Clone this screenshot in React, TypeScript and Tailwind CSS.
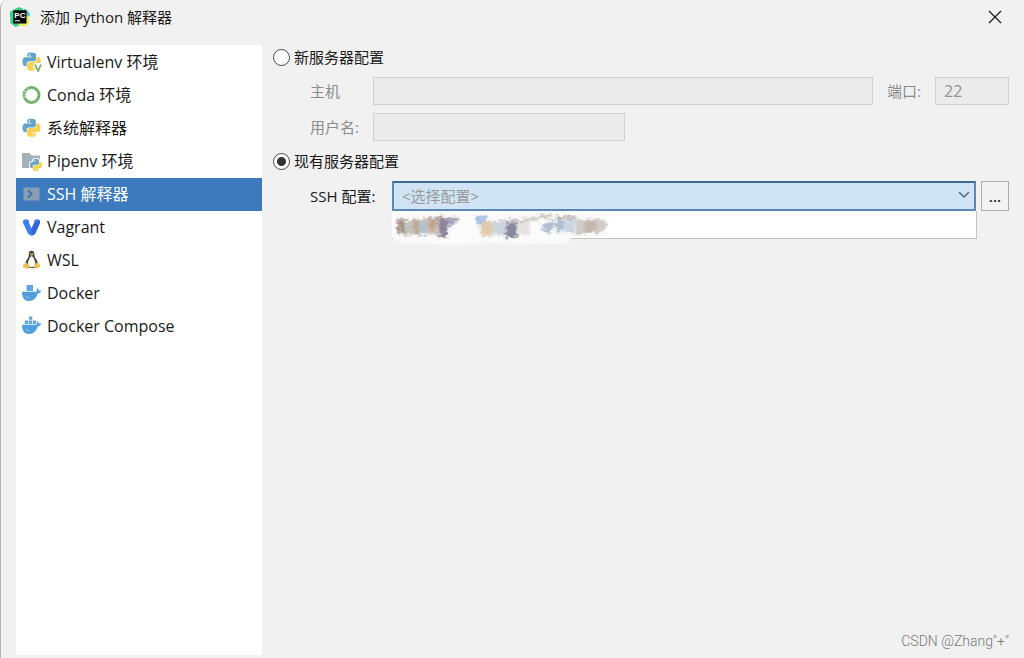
import {useId, useState} from "react";
import type {ReactNode} from "react";

const SNAKE =
    "M14.25.18l.9.2.73.26.59.3.45.32.34.34.25.34.16.33.1.3.04.26.02.2-.01.13V8.5l-.05.63-.13.55-.21.46-.26.38-.3.31-.33.25-.35.19-.35.14-.33.1-.3.07-.26.04-.21.02H8.77l-.69.05-.59.14-.5.22-.41.27-.33.32-.27.35-.2.36-.15.37-.1.35-.07.32-.04.27-.02.21v3.06H3.17l-.21-.03-.28-.07-.32-.12-.35-.18-.36-.26-.36-.36-.35-.46-.32-.59-.28-.73-.21-.88-.14-1.05-.05-1.23.06-1.22.16-1.04.24-.87.32-.71.36-.57.4-.44.42-.33.42-.24.4-.16.36-.1.32-.05.24-.01h.16l.06.01h8.16v-.83H6.18l-.01-2.75-.02-.37.05-.34.11-.31.17-.28.25-.26.31-.23.38-.2.44-.18.51-.15.58-.12.64-.1.71-.06.77-.04.84-.02 1.27.05z";

function Snakes() {
    return (
        <>
            <path d={SNAKE} fill="#64a4cb"/>
            <circle cx="9.1" cy="3" r="1.1" fill="#fff"/>
            <g transform="rotate(180 12 12)">
                <path d={SNAKE} fill="#f9d04f"/>
                <circle cx="9.1" cy="3" r="1.1" fill="#fff"/>
            </g>
        </>
    );
}

function Icon({children}: {children: ReactNode}) {
    return (
        <svg className="h-5 w-5 shrink-0" viewBox="0 0 20 20" aria-hidden="true">
            {children}
        </svg>
    );
}

function VirtualenvIcon() {
    return (
        <Icon>
            <g transform="translate(.5 .5) scale(.76)">
                <Snakes/>
            </g>
            <path d="M11.500 11h8.500v9h-6z" fill="#fff"/>
            <path d="m13.200 12.500 2.900 6.500 2.900-6.500" fill="none" stroke="#72b15c" strokeWidth="1.700"/>
        </Icon>
    );
}

function CondaIcon() {
    return (
        <Icon>
            <circle cx="9.500" cy="10" r="7.500" fill="none" stroke="#6cb266" strokeWidth="3"/>
            <path d="M2 5.500 5 7.500M.5 9l4 .8M4.500 2.500l2 3M.8 12.500l3.500-.8" stroke="#fff" strokeWidth=".6"/>
            <circle cx="9.500" cy="10" r="6.600" fill="none" stroke="#d8edd5" strokeWidth="1" strokeDasharray="1 1.600" pathLength="42" opacity=".6"/>
        </Icon>
    );
}

function PythonIcon() {
    return (
        <Icon>
            <g transform="translate(.5 .8) scale(.75)">
                <Snakes/>
            </g>
        </Icon>
    );
}

function PipenvIcon() {
    return (
        <Icon>
            <path d="M0 2h7.500l2 2.500H18V17H0z" fill="#a5b1b9"/>
            <g transform="translate(8 8) scale(.5)">
                <g stroke="#fff" strokeWidth="4" strokeLinejoin="round">
                    <path d={SNAKE}/>
                    <path d={SNAKE} transform="rotate(180 12 12)"/>
                </g>
                <Snakes/>
            </g>
        </Icon>
    );
}

function SshIcon() {
    return (
        <Icon>
            <path d="M1.500 3.500h16v13h-16z" fill="#8a9eb3"/>
            <path d="m6 6.500 3.800 3.500L6 13.500" fill="none" stroke="#3b75ae" strokeWidth="1.900"/>
        </Icon>
    );
}

function VagrantIcon() {
    return (
        <Icon>
            <path d="M1 3.500 4 2l3 1.500v2.200l2.600 5.800 2.600-5.800V3.500l3-1.500L18 3.500v2.300L13 17l-3.400 1.700L6.200 17 1 5.800z" fill="#3f7df0"/>
            <path d="m12.200 5.700 2.500-1.200L18 3.500v2.300L13 17l-3.400 1.700v-7.200z" fill="#3164d8"/>
        </Icon>
    );
}

function TuxIcon() {
    return (
        <Icon>
            <path d="M9.600.8c-2 0-3 1.500-2.800 3.600.1 2-.4 2.800-1.500 4.500C4 11 3.300 12.600 3.500 15l4.500 3h4l3.800-3c.2-2.500-.6-4.300-1.900-6.200-1.200-1.700-1.500-2.500-1.500-4.300C12.400 2.200 11.500.8 9.600.8z" fill="#423e38"/>
            <path d="M9.500 6.300c-1 0-1.500.900-2 2.200-.9 2-1.700 3.200-1.500 5.200.1 2.200 1.500 3.600 3.600 3.600 2.200 0 3.700-1.400 3.800-3.800.1-1.900-.8-3.300-1.600-5-.5-1.200-1-2.200-2.300-2.200z" fill="#f8f7f4"/>
            <path d="M8 4.300h3.500L9.800 6.200z" fill="#eebd45"/>
            <circle cx="8.700" cy="3.500" r=".55" fill="#fff"/>
            <circle cx="10.800" cy="3.500" r=".55" fill="#fff"/>
            <path d="M4.200 12.300 7.500 16.500c.5 1.300-.5 2.500-2 2.200l-4-1c-1-.3-.5-1.200-.2-2-.3-1.200.3-1.500 1.300-1.700zM15.100 12.300l-2.700 3.200c-.7 1.800-.3 3.400 1.300 3.300 1.700-.3 2.500-1.300 4-1.900 1-.5.8-1.100-.1-1.800-.2-1.600-.5-1.800-1-1.800z" fill="#ecc153"/>
        </Icon>
    );
}

function Whale() {
    return (
        <>
            <path d="M0 8.800h14.800c-.4-1.500-.1-2.500.7-3.500.9.700 1.300 1.400 1.400 2.300.9-.1 1.600 0 2.200.4-.5 1.600-1.600 2.300-3.300 2.300C14.500 15 11.700 18 7 18 2.700 18 0 15 0 8.800z" fill="#529ddf"/>
            <path d="M4.500 12.800c0 1.500 1.200 2.300 2.500 2" fill="none" stroke="#b7d8f3" strokeWidth=".8"/>
        </>
    );
}

function DockerIcon() {
    return (
        <Icon>
            <Whale/>
            <path d="M4.500 2H11v6H4.500z" fill="#61a7e4"/>
        </Icon>
    );
}

function DockerComposeIcon() {
    return (
        <Icon>
            <Whale/>
            <path d="M7 .5h3.300v3.300H7zM2.800 4.500h3.600V8H2.800zM7 4.500h3.300V8H7zM11 4.500h3V8h-3z" fill="#61a7e4"/>
        </Icon>
    );
}

function PyCharmIcon() {
    return (
        <svg className="h-5 w-5 shrink-0" viewBox="0 0 20 20" aria-hidden="true">
            <path d="M0 4.500 9 0l5.500 2.500L13 17l-7.500 3L.3 16z" fill="#35d188"/>
            <path d="m13 2 5 2 2 4-1.500 2 1 6.500-5.500 3.200L8 18z" fill="#e8ee55"/>
            <path d="m13.800 1.500 4.500 2.700L20 8l-1.700 1.700-4-4z" fill="#38bfe8"/>
            <path d="M3.300 3.300h13.200v13.200H3.300z" fill="#050505"/>
            <path d="M5 13.800h5" stroke="#fff" strokeWidth="1"/>
            <text x="4.300" y="10.500" fill="#fff" fontFamily="Liberation Sans" fontWeight="700" fontSize="8">PC</text>
        </svg>
    );
}

const ENVIRONMENTS = [
    {label: "Virtualenv 环境", icon: <VirtualenvIcon/>},
    {label: "Conda 环境", icon: <CondaIcon/>},
    {label: "系统解释器", icon: <PythonIcon/>},
    {label: "Pipenv 环境", icon: <PipenvIcon/>},
    {label: "SSH 解释器", icon: <SshIcon/>},
    {label: "Vagrant", icon: <VagrantIcon/>},
    {label: "WSL", icon: <TuxIcon/>},
    {label: "Docker", icon: <DockerIcon/>},
    {label: "Docker Compose", icon: <DockerComposeIcon/>},
];

// Hidden server name in the open list
function Smudge() {
    const id = useId();
    return (
        <svg className="absolute -left-1 -top-1 h-10 w-60" viewBox="0 0 240 40" aria-hidden="true">
            <defs>
                <filter id={id} x="-10%" y="-30%" width="120%" height="160%">
                    <feTurbulence type="fractalNoise" baseFrequency=".25 .35" numOctaves="3" seed="4" result="n"/>
                    <feGaussianBlur in="SourceGraphic" stdDeviation="1.300" result="b"/>
                    <feDisplacementMap in="b" in2="n" scale="8" xChannelSelector="R" yChannelSelector="G"/>
                </filter>
            </defs>
            <g filter={`url(#${id})`}>
                <path d="M4 8h216v20l-36 1-4 7-50 1-30-1-40 2-54-3z" fill="#fbfbfb"/>
                <path d="M8 13h22l8-3h32l-6 7-8 11H44l-6-2-20 3-8-2z" fill="#cdc3bd"/>
                <path d="M10 12h7v14h-7z" fill="#a39588"/>
                <path d="M17 16h9v10h-9z" fill="#bfc3bf"/>
                <path d="M26 12h4v15h-4zM40 13h8v10h-8z" fill="#c0a385"/>
                <path d="M30 15h9v13h-9z" fill="#b3c3ca"/>
                <path d="M44 10h20v3H44z" fill="#a99a98"/>
                <path d="M51 12h8v19h-8z" fill="#8d869a"/>
                <path d="M59 11h12l-6 8h-6z" fill="#aaa4bb"/>
                <path d="M86 9h13v8l-9 2z" fill="#aac3e5"/>
                <path d="M93 15h11v14H93z" fill="#e3cbaa"/>
                <path d="M104 14h17v14h-17z" fill="#ccd5dd"/>
                <path d="M119 14h10v17h-12z" fill="#868a9c"/>
                <path d="M129 16h13v12h-13z" fill="#e6e3e3"/>
                <path d="m108 13 28-1 28-6v4l-30 6z" fill="#c9c3be"/>
                <path d="m152 20 10-7 5 4-6 10zM166 15l8-5 3 10-7 7z" fill="#b0bdce"/>
                <path d="m176 14 12-3-3 16-9-3z" fill="#c6d6e3"/>
                <path d="M168 9h20v3h-20z" fill="#b3aca0"/>
                <path d="M188 12h28l4 4-5 9-28 3z" fill="#d2cbc8"/>
                <path d="M196 13h12v13h-12z" fill="#c5b8b0"/>
            </g>
        </svg>
    );
}

const FIELD = "h-7 border border-[#d0d0d0] bg-[#ebebeb] px-2 pb-px text-[#929292] outline-none";
const RADIO = "h-[17px] w-[17px] appearance-none rounded-full border border-[#454545] bg-white checked:bg-[radial-gradient(circle,#333_4px,transparent_5px)]";

export default function App() {
    const [current, setCurrent] = useState("SSH 解释器");

    return (
        <main className="flex min-h-screen flex-col rounded-tl-lg border-l border-[#b4b4b4] bg-[#f1f1f1] pb-[3px] font-['Open_Sans','Noto_Sans_CJK_SC',sans-serif] text-base leading-5 text-[#1a1a1a]">
            <header className="flex h-[45px] shrink-0 items-start justify-between pl-[9px] pr-[21px] pt-[7px]">
                <h1 className="flex items-center gap-[10px] text-[15px] leading-5">
                    <PyCharmIcon/>
                    添加 Python 解释器
                </h1>
                <button type="button" aria-label="关闭" className="flex h-5 items-center">
                    <svg className="h-4 w-4" viewBox="0 0 16 16" aria-hidden="true">
                        <path d="m2 2 12 12M14 2 2 14" fill="none" stroke="#222" strokeWidth="1.400"/>
                    </svg>
                </button>
            </header>

            <div className="flex flex-1 pl-[15px] pr-[15px]">
                <nav className="w-[246px] shrink-0 bg-white pt-px">
                    <ul>
                        {ENVIRONMENTS.map(({label, icon}) => (
                            <li key={label}>
                                <button
                                    type="button"
                                    aria-pressed={label === current}
                                    onClick={() => setCurrent(label)}
                                    className={`flex h-[33px] w-full items-center gap-[5px] pb-px pl-[6px] text-left ${label === current ? "bg-[#3c7abd] text-white" : ""}`}
                                >
                                    {icon}
                                    {label}
                                </button>
                            </li>
                        ))}
                    </ul>
                </nav>

                <form className="flex min-w-0 flex-1 flex-col pl-[11px] text-[15px] leading-5">
                    <label className="flex h-6 items-center gap-1">
                        <input type="radio" name="server" className={RADIO}/>
                        新服务器配置
                    </label>

                    <div className="mt-2 flex items-center pl-[37px] text-[#8c8c8c]">
                        <label htmlFor="host" className="w-[63px] shrink-0">主机</label>
                        <input id="host" disabled className={`${FIELD} min-w-0 flex-1`}/>
                        <label htmlFor="port" className="ml-[14px] w-12 shrink-0">端口:</label>
                        <input id="port" disabled defaultValue="22" className={`${FIELD} w-[74px] text-base`}/>
                    </div>

                    <div className="mt-2 flex items-center pl-[37px] text-[#8c8c8c]">
                        <label htmlFor="user" className="w-[63px] shrink-0">用户名:</label>
                        <input id="user" disabled className={`${FIELD} w-[252px]`}/>
                    </div>

                    <label className="mt-2 flex h-6 items-center gap-1">
                        <input type="radio" name="server" defaultChecked className={RADIO}/>
                        现有服务器配置
                    </label>

                    <div className="mt-2 flex items-center pl-[37px]">
                        <label htmlFor="ssh" className="w-[82px] shrink-0">SSH 配置:</label>
                        <div className="relative min-w-0 flex-1">
                            <select id="ssh" className="block h-[30px] w-full appearance-none border-2 border-[#5b88b6] border-t-[#3f6a98] bg-[#d0e4f5] px-2 pb-px text-[#999] outline-none">
                                <option>&lt;选择配置&gt;</option>
                            </select>
                            <svg className="pointer-events-none absolute right-[5px] top-[7px] h-[14px] w-[14px]" viewBox="0 0 14 14" aria-hidden="true">
                                <path d="m2 4 5 5 5-5" fill="none" stroke="#51606f" strokeWidth="1.400"/>
                            </svg>
                            <div className="absolute -right-px left-0 top-full h-7 border-b border-r border-[#c4c4c4] bg-white">
                                <Smudge/>
                            </div>
                        </div>
                        <button type="button" className="ml-[5px] h-[30px] w-7 border border-[#ababab] bg-[#f3f3f3] font-semibold leading-5">...</button>
                    </div>

                    <p className="mb-1 mt-auto self-end font-['Roboto'] text-sm font-light text-[#777]">CSDN @Zhang"+"</p>
                </form>
            </div>
        </main>
    );
}
